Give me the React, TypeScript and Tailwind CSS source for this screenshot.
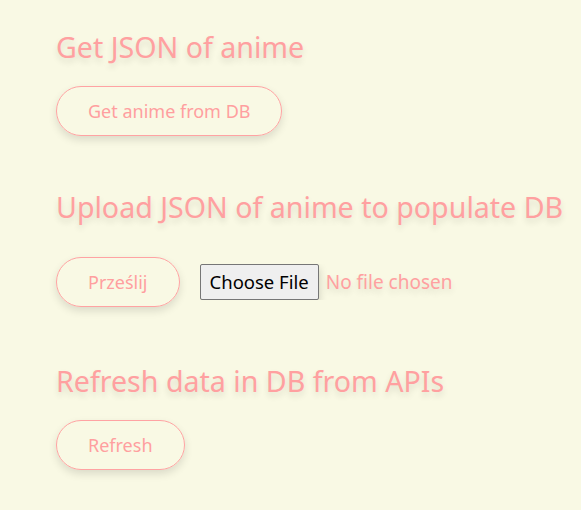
const font = { fontFamily: '"Noto Sans", "Open Sans", sans-serif' };

function PillButton({ label }: { label: string }) {
  return (
    <button className="h-[50px] rounded-full border border-[#ffa3a3] bg-transparent px-[31px] text-[18px] text-[#ff9f9f] shadow-[0_4px_8px_rgba(0,0,0,0.12)]">
      {label}
    </button>
  );
}

function Heading({ children }: { children: React.ReactNode }) {
  return (
    <h2 className="text-[28.6px] leading-[38px] text-[#ffa0a0] [text-shadow:0_4px_6px_rgba(0,0,0,0.12)]">
      {children}
    </h2>
  );
}

export default function App() {
  return (
    <div className="min-h-[510px] w-full bg-[#f9f9e4] pl-[56px] pt-[28px]" style={font}>
      <section className="flex flex-col items-start gap-[20px]">
        <Heading>Get JSON of anime</Heading>
        <PillButton label="Get anime from DB" />
      </section>

      <section className="mt-[52px] flex flex-col items-start gap-[31px]">
        <Heading>Upload JSON of anime to populate DB</Heading>
        <div className="flex items-center gap-[20px]">
          <PillButton label="Prześlij" />
          <input
            type="file"
            className="text-[19px] text-[#ffa0a0] [text-shadow:0_4px_6px_rgba(0,0,0,0.12)] file:mr-[7px] file:h-[36px] file:rounded-[2px] file:border file:border-solid file:border-[#767676] file:bg-[#efefef] file:px-[9px] file:text-[18.5px] file:text-black file:shadow-[0_4px_8px_rgba(0,0,0,0.18)]"
          />
        </div>
      </section>

      <section className="mt-[55px] flex flex-col items-start gap-[20px]">
        <Heading>Refresh data in DB from APIs</Heading>
        <PillButton label="Refresh" />
      </section>
    </div>
  );
}
